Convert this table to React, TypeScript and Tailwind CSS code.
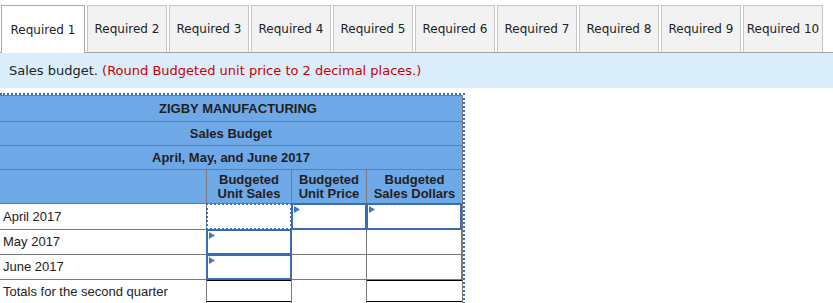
import React from "react";

const tabs = ["Required 1", "Required 2", "Required 3", "Required 4", "Required 5", "Required 6", "Required 7", "Required 8", "Required 9", "Required 10"];

type BoxKind = "none" | "dotted" | "solid";

const Triangle = () => (
    <svg className="absolute left-[1px] top-[1px]" width="6" height="7" viewBox="0 0 6 7">
        <polygon points="0,0 6,3.5 0,7" fill="#3a78c9" />
    </svg>
);

const InputCell = ({ kind, width, extra = "" }: { kind: BoxKind; width: string; extra?: string }) => (
    <div className={`relative h-full border-r border-[#7a7a7a] ${width} ${extra}`}>
        {kind === "dotted" && (
            <div className="absolute -top-px -left-px -right-px -bottom-px border-2 border-dotted border-[#3a6fc0]" />
        )}
        {kind === "solid" && (
            <div className="absolute -top-px -left-px -right-px -bottom-px border-2 border-[#3b6db5]">
                <Triangle />
            </div>
        )}
    </div>
);

const DataRow = ({ label, boxes, height, last = false }: { label: string; boxes: BoxKind[]; height: string; last?: boolean }) => (
    <div className={`flex ${height} ${last ? "" : "border-b border-[#7a7a7a]"}`}>
        <div className="w-[207px] border-r border-[#7a7a7a] flex items-center pl-[3px] text-[13px] text-[#222]">{label}</div>
        <InputCell kind={boxes[0]} width="w-[85px]" />
        <InputCell kind={boxes[1]} width="w-[75px]" />
        <InputCell kind={boxes[2]} width="w-[95px]" />
    </div>
);

export default function App() {
    return (
        <div className="w-[833px] h-[303px] bg-white overflow-hidden">
            <div className="flex gap-[2px] pl-[1px] pt-[5px] border-b border-[#a3a3a3] font-['DejaVu_Sans',sans-serif] text-[12px] text-[#222]">
                {tabs.map((t, i) => (
                    <div
                        key={t}
                        className={
                            i === 0
                                ? "w-[84px] h-[48px] -mb-px bg-white border border-b-0 border-[#a8a8a8] flex items-center justify-center"
                                : "w-[80px] h-[47px] bg-[#f2f2f2] border border-b-0 border-[#c6c6c6] flex items-center justify-center"
                        }
                    >
                        {t}
                    </div>
                ))}
            </div>

            <div className="h-[35px] bg-[#d9eefa] flex items-center pl-[9px] font-['DejaVu_Sans',sans-serif] text-[13px] text-[#222]">
                Sales budget.&nbsp;<span className="text-[#cc0000]">(Round Budgeted unit price to 2 decimal places.)</span>
            </div>

            <div className="mt-[5px] w-[465px] border-t-2 border-r-2 border-dotted border-[#3a6fc0] font-['Liberation_Sans',Arial,sans-serif]">
                <div className="w-[463px] border-t border-r border-[#7a7a7a]">
                    <div className="bg-[#6fa8e6] text-[13px] font-bold text-[#1f1f1f]">
                        <div className="h-[26px] border-b border-[#7a7a7a] flex items-center justify-center pl-[14px]">ZIGBY MANUFACTURING</div>
                        <div className="h-[24px] border-b border-[#7a7a7a] flex items-center justify-center">Sales Budget</div>
                        <div className="h-[24px] border-b border-[#7a7a7a] flex items-center justify-center">April, May, and June 2017</div>
                        <div className="h-[34px] border-b border-[#7a7a7a] flex leading-[14px]">
                            <div className="w-[207px] border-r border-[#7a7a7a]" />
                            <div className="w-[85px] border-r border-[#7a7a7a] flex flex-col items-center justify-center">
                                <span>Budgeted</span>
                                <span>Unit Sales</span>
                            </div>
                            <div className="w-[75px] border-r border-[#7a7a7a] flex flex-col items-center justify-center">
                                <span>Budgeted</span>
                                <span>Unit Price</span>
                            </div>
                            <div className="flex-1 flex flex-col items-center justify-center">
                                <span>Budgeted</span>
                                <span>Sales Dollars</span>
                            </div>
                        </div>
                    </div>

                    <DataRow label="April 2017" boxes={["dotted", "solid", "solid"]} height="h-[26px]" />
                    <DataRow label="May 2017" boxes={["solid", "none", "none"]} height="h-[25px]" />
                    <DataRow label="June 2017" boxes={["solid", "none", "none"]} height="h-[25px]" />
                    <div className="flex h-[24px]">
                        <div className="w-[207px] border-r border-[#7a7a7a] flex items-center pl-[3px] text-[13px] text-[#222]">Totals for the second quarter</div>
                        <div className="w-[85px] border-r border-[#7a7a7a]">
                            <div className="h-full border-t border-b-[3px] border-double border-black" />
                        </div>
                        <div className="w-[75px] border-r border-[#7a7a7a]" />
                        <div className="flex-1">
                            <div className="h-full border-t border-b-[3px] border-double border-black" />
                        </div>
                    </div>
                </div>
            </div>
        </div>
    );
}
